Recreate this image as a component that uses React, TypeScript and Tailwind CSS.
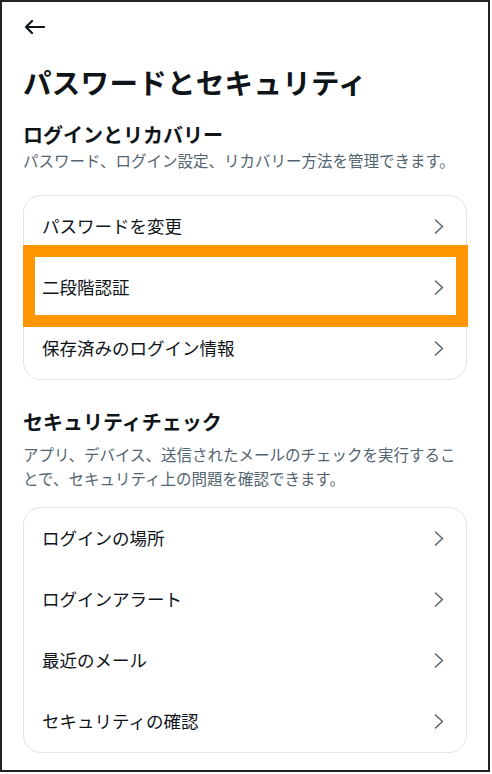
const sections = [
  {
    title: 'ログインとリカバリー',
    desc: 'パスワード、ログイン設定、リカバリー方法を管理できます。',
    items: ['パスワードを変更', '二段階認証', '保存済みのログイン情報'],
  },
  {
    title: 'セキュリティチェック',
    desc: 'アプリ、デバイス、送信されたメールのチェックを実行することで、セキュリティ上の問題を確認できます。',
    items: ['ログインの場所', 'ログインアラート', '最近のメール', 'セキュリティの確認'],
  },
];

const Chevron = () => (
  <svg width="10" height="15" viewBox="0 0 10 15" fill="none">
    <path d="M1.5 1l7 6.5-7 6.5" stroke="#536471" strokeWidth="1.5" strokeLinecap="round" strokeLinejoin="round" />
  </svg>
);

const Row = ({ label }: { label: string }) => (
  <div className="h-[61px] flex items-center justify-between pl-[18px] pr-[22px]">
    <span className="text-[17.5px] text-[#0f1419]">{label}</span>
    <Chevron />
  </div>
);

export default function App() {
  return (
    <div
      className="w-[490px] h-[772px] border-2 border-[#222] bg-white overflow-hidden"
      style={{ fontFamily: '"Noto Sans CJK JP", "Noto Sans", sans-serif' }}
    >
      <div className="px-[21px]">
        <div className="h-[50px] flex items-center pl-[1px]">
          <svg width="21" height="14" viewBox="0 0 21 14" fill="none">
            <path d="M20 7H2M8 1L2 7l6 6" stroke="#0f1419" strokeWidth="2.2" strokeLinecap="round" strokeLinejoin="round" />
          </svg>
        </div>
        <h1 className="mt-[12px] text-[28.5px] leading-[36px] font-bold text-[#0f1419] tracking-[0.3px]">
          パスワードとセキュリティ
        </h1>

        {/* ログインとリカバリー */}
        <h2 className="mt-[21px] text-[20px] leading-[28px] font-bold text-[#0f1419]">{sections[0].title}</h2>
        <p className="text-[15.5px] leading-[23px] text-[#536471]">{sections[0].desc}</p>
        <div className="relative mt-[23px] border border-[#dfe4ea] rounded-[18px]">
          {sections[0].items.map((item) => (
            <Row key={item} label={item} />
          ))}
          <div className="absolute left-[-1px] right-[-2px] top-[49px] h-[82px] border-[12px] border-[#ff9500]" />
        </div>

        {/* セキュリティチェック */}
        <h2 className="mt-[28px] text-[20px] leading-[28px] font-bold text-[#0f1419]">{sections[1].title}</h2>
        <p className="mt-[7px] text-[15.5px] leading-[23.5px] text-[#536471]">{sections[1].desc}</p>
        <div className="mt-[17px] border border-[#dfe4ea] rounded-[18px]">
          {sections[1].items.map((item) => (
            <Row key={item} label={item} />
          ))}
        </div>
      </div>
    </div>
  );
}
